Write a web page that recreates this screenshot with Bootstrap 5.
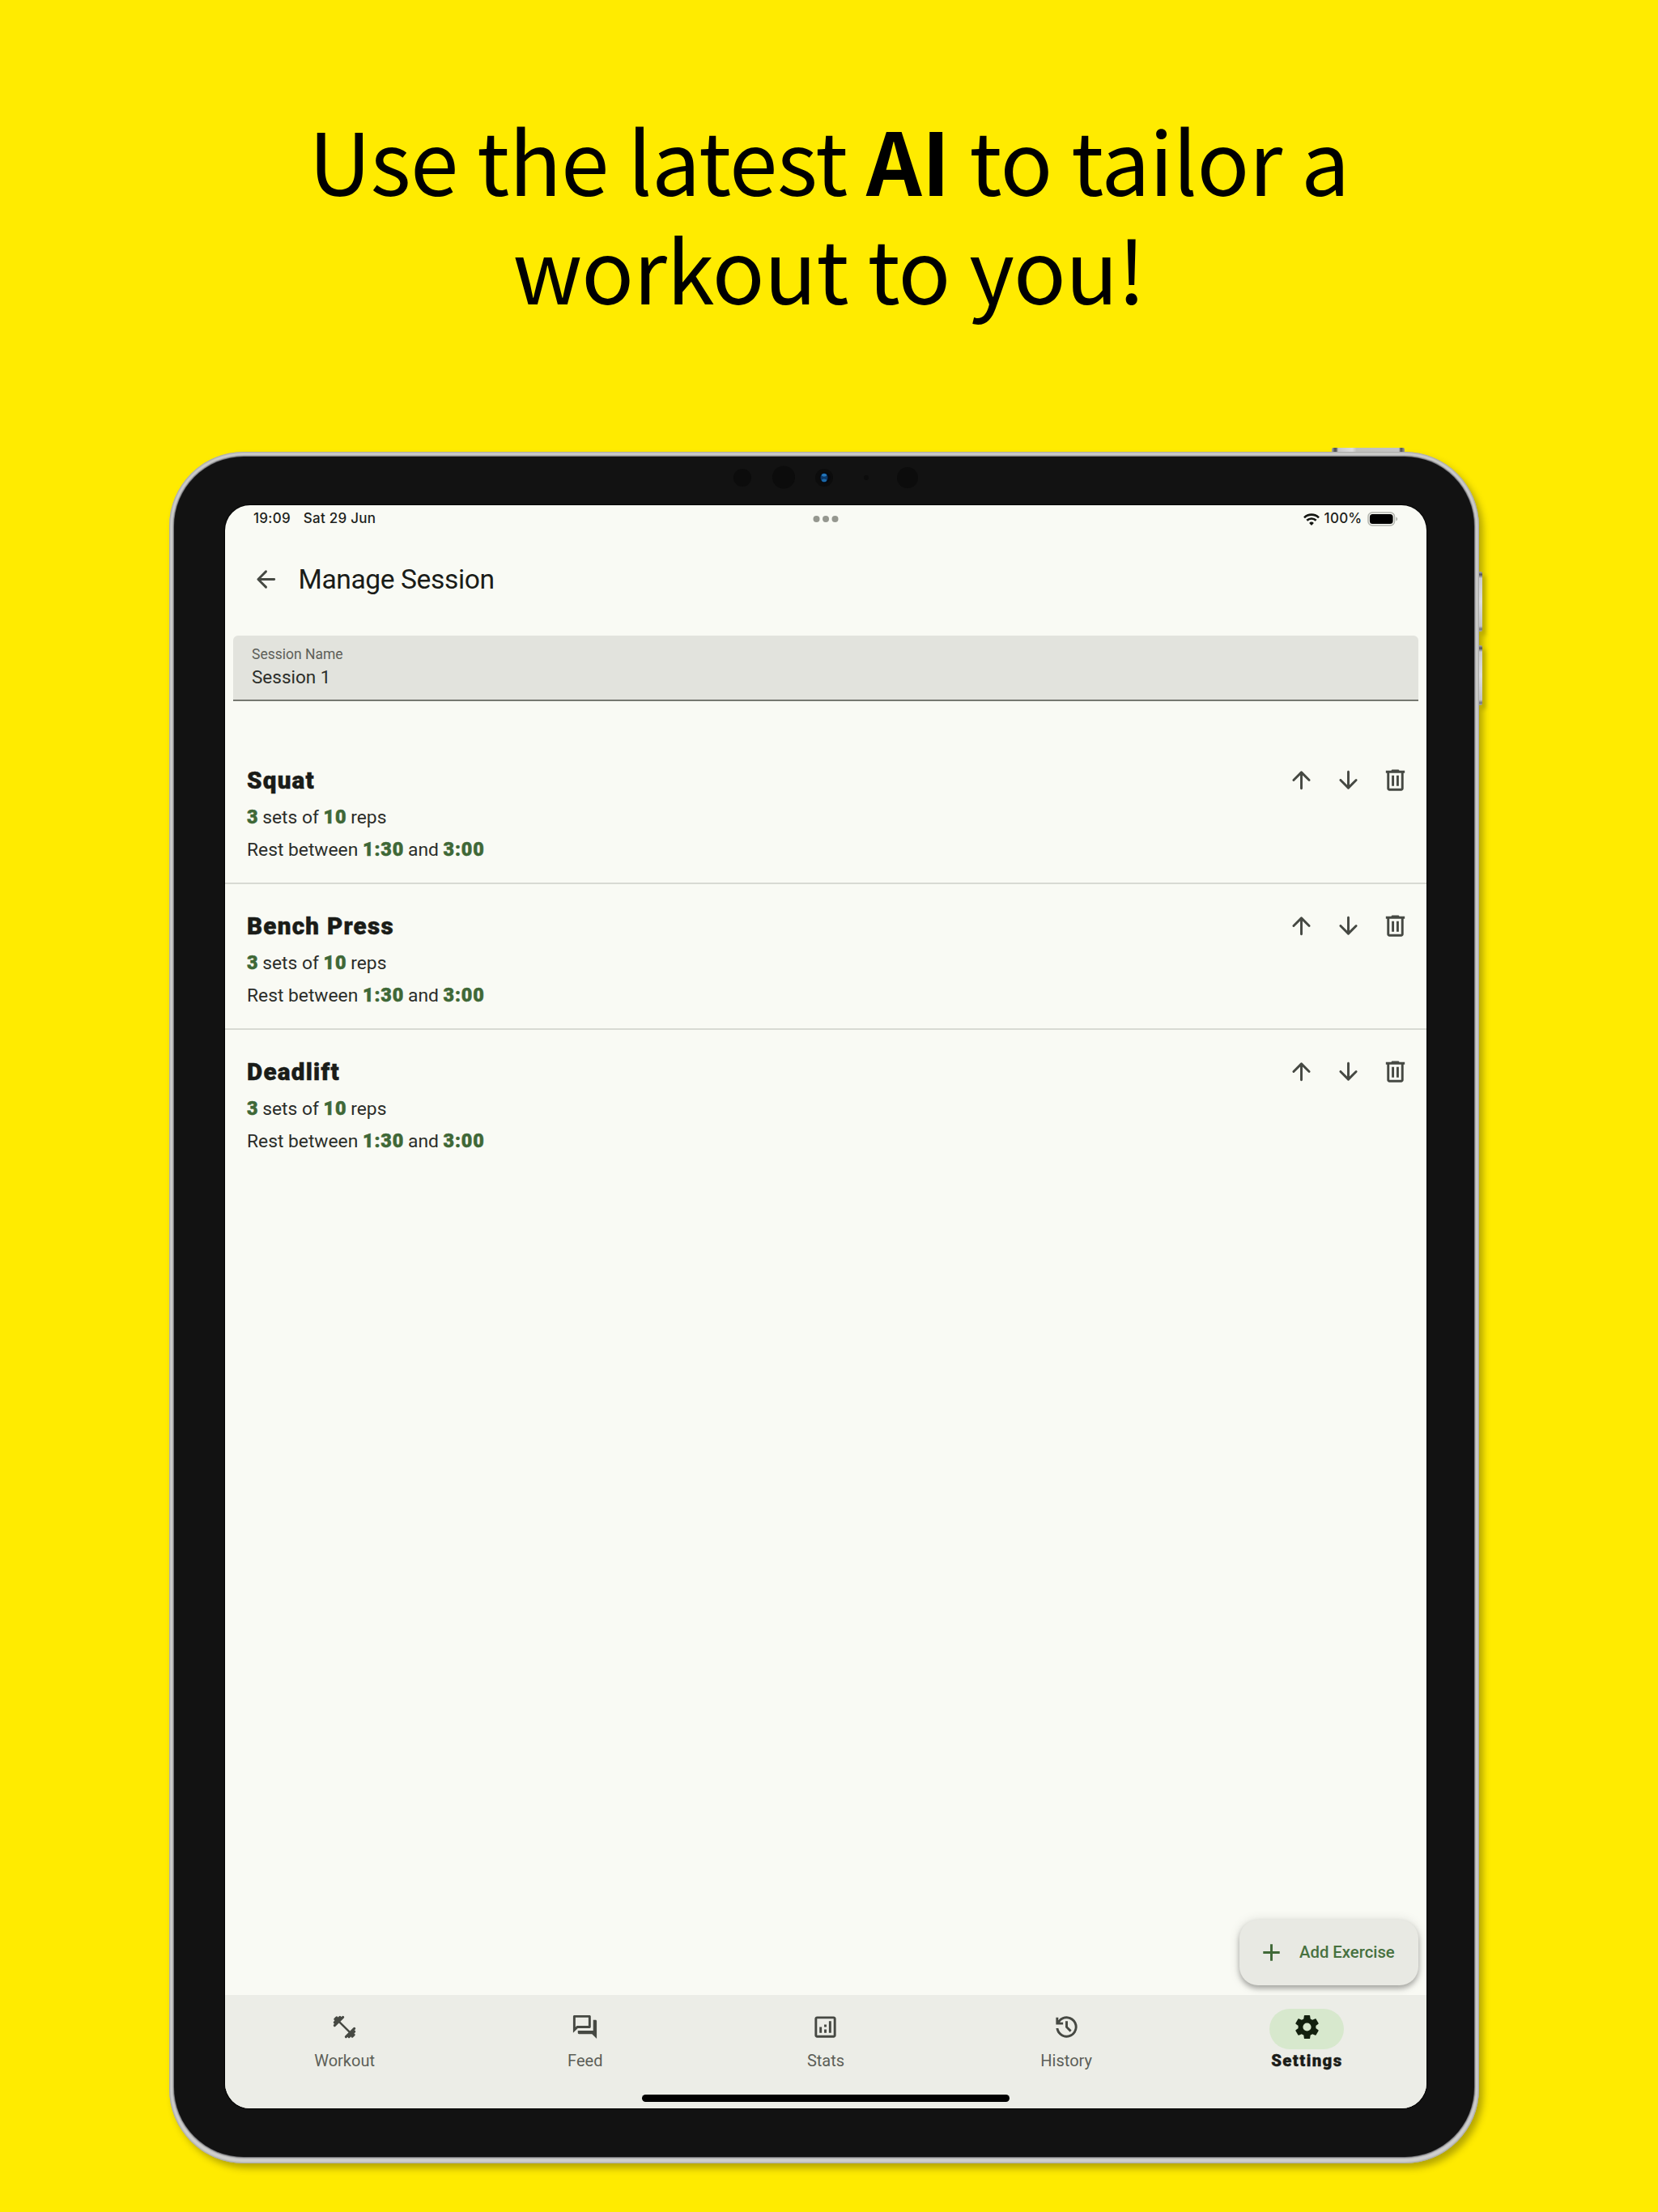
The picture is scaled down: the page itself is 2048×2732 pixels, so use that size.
<!DOCTYPE html>
<html lang="en">
<head>
<meta charset="utf-8">
<meta name="viewport" content="width=device-width, initial-scale=1">
<title>Manage Session</title>
<link rel="stylesheet" href="https://cdn.jsdelivr.net/npm/bootstrap@5.3.0/dist/css/bootstrap.min.css">
<style>
  body { background: #ffeb00; width: 2048px; height: 2732px; overflow: hidden; font-family: Roboto, "Liberation Sans", sans-serif; color: #1a1c18; }
  .headline { height: 558px; padding-top: 129px; font-family: "Noto Sans CJK SC", "Noto Sans", sans-serif; font-size: 107px; letter-spacing: -.6px; line-height: 134px; color: #000; font-weight: 400; }
  .headline strong { font-weight: 700; letter-spacing: 0; }
  .tablet { width: 1618px; height: 2114px; margin-left: 209px; padding: 6px 6px 8px; border-radius: 92px; background: #cfcfcd; box-shadow: inset 0 0 2px 1px #a3a3a0, 5px 6px 8px rgba(60,55,0,.38); }
  .bezel { background: #121212; border-radius: 86px; padding: 60px 59px 60px 63px; box-shadow: 0 0 2px 1px #55555a; }
  .screen { background: #f9faf4; border-radius: 31px; height: 1980px; width: 1484px; overflow: hidden; box-shadow: 0 0 1px 1px #050505; }
  .hw { position: absolute; }
  .hw-power { left: 1436px; top: -5px; width: 90px; height: 5px; border-radius: 2px 2px 0 0; background: linear-gradient(90deg, #aaa 0, #555 4%, #555 6%, #c8c8c8 9%, #ddd 28%, #c0c0bc 34%, #c4c4c4 92%, #555 95%, #999 100%); }
  .hw-vol { left: 1618px; width: 4px; height: 74px; border-radius: 0 2px 2px 0; background: linear-gradient(#aaa 0, #555 5%, #ccc 11%, #ddd 50%, #c4c4c4 91%, #777 96%, #aaa 100%); box-shadow: 4px 5px 5px rgba(60,55,0,.3); }
  .vol-up { top: 148px; } .vol-down { top: 239px; }
  .cams { left: 690px; top: 10px; }
  .status { height: 34px; padding: 0 35px 0 35px; font-family: Inter, sans-serif; font-size: 17px; font-weight: 500; letter-spacing: .25px; color: #1d1f1b; }
  .status .multi { left: 725px; top: 12px; }
  .status .charge { margin: 0 6.5px 0 6px; }
  .appbar { height: 127px; padding: 21.5px 0 0 33px; }
  .appbar h1 { font-size: 33.6px; font-weight: 400; letter-spacing: -.4px; line-height: 40px; margin: 0 0 0 22.5px; }
  .ic { width: 35px; height: 35px; fill: #464943; display: block; flex: none; }
  .flip { transform: rotate(180deg); }
  .field { margin: 0 10px; height: 81px; background: #e2e3dd; border-radius: 6px 6px 0 0; border-bottom: 2px solid #757870; padding: 12.5px 23px 0; }
  .field label { display: block; font-size: 17.5px; line-height: 20px; color: #5d6059; }
  .field .val { font-size: 22.500px; line-height: 26px; margin-top: 5px; color: #2c2e2a; }
  .exs { margin-top: 46px; }
  .ex { height: 180.2px; padding: 34px 10px 0 27px; border-bottom: 2px solid #d8dad3; }
  .ex:last-child { border-bottom: 0; }
  .ex h2 { font-size: 29.6px; font-weight: 900; line-height: 36px; letter-spacing: 1.25px; margin: 0; -webkit-text-stroke: .5px #1a1c18; }
  .ex p { font-size: 22.8px; line-height: 40.3px; margin: 0; color: #2b2d29; }
  .ex h2 + p { margin-top: 7.500px; }
  .ex p b { font-weight: 900; color: #3f6837; font-size: 23.4px; line-height: 1; letter-spacing: .9px; margin-right: -.9px; -webkit-text-stroke: .5px #3f6837; }
  .act { width: 57.7px; height: 36px; }
  .fab { margin: 0 10px 12px 0; width: 221px; height: 81px; border-radius: 23px; background: #e8e9e3; color: #47713f; border: 0; font-size: 20.3px; font-weight: 500; padding: 0 0 0 22px; box-shadow: 0 4px 6px rgba(0,0,0,.28), 0 1px 14px rgba(0,0,0,.13); }
  .fab .ic { fill: #3f6837; margin-right: 17px; }
  .tabs { height: 140px; background: #ecede7; margin: 0 -1px; }
  .tab { width: 20%; padding-top: 17px; color: #5c5f58; font-size: 20px; line-height: 24px; }
  .tab .pill { width: 92px; height: 50px; border-radius: 25px; margin-bottom: 1.5px; padding-bottom: 5px; }
  .tab.on { color: #1a1c18; font-weight: 900; font-size: 20.4px; letter-spacing: 1.4px; -webkit-text-stroke: .4px #1a1c18; }
  .tab.on .pill { background: #d7e8cd; } .tab.on .ic { fill: #12200e; }
  .homebar { left: 515px; bottom: 8px; width: 454px; height: 9px; border-radius: 5px; background: #000; }
</style>
</head>
<body>
<svg width="0" height="0" class="d-none">
  <symbol id="up" viewBox="0 0 24 24"><path d="M13 19V7.83l4.88 4.88c.39.39 1.03.39 1.42 0s.39-1.02 0-1.41l-6.59-6.59a.996.996 0 0 0-1.41 0l-6.6 6.58a.996.996 0 1 0 1.41 1.41L11 7.83V19c0 .55.45 1 1 1s1-.45 1-1z"/></symbol>
  <symbol id="bin" viewBox="0 0 24 24"><path fill-rule="evenodd" d="M15.500 4l-.7-1H9.200l-.7 1H4v2h1v13c0 1.100.9 2 2 2h10c1.100 0 2-.9 2-2V6h1V4zM7 6h10v13H7zM9 8h2v9H9zM13 8h2v9h-2z"/></symbol>
</svg>

<h1 class="headline text-center m-0">Use the latest <strong>AI</strong> to tailor a<br>workout to you!</h1>

<div class="tablet position-relative">
  <span class="hw hw-power"></span><span class="hw hw-vol vol-up"></span><span class="hw hw-vol vol-down"></span>
  <svg class="cams position-absolute" width="240" height="44" viewBox="0 0 240 44">
    <g fill="#0c0c0c"><circle cx="18" cy="22" r="11"/><circle cx="69" cy="21.500" r="14"/><circle cx="119" cy="22" r="11"/><circle cx="171" cy="22" r="3"/><circle cx="222" cy="22" r="13"/></g>
    <circle cx="120" cy="22" r="6.500" fill="#05080f"/><ellipse cx="119" cy="22" rx="4.500" ry="5.500" fill="#0b3768"/><ellipse cx="119" cy="18.800" rx="3" ry="1.800" fill="#2277bd"/><ellipse cx="119" cy="25.200" rx="3" ry="1.800" fill="#1c69a8"/>
  </svg>
  <div class="bezel">
    <main class="screen d-flex flex-column position-relative">
      <div class="status d-flex align-items-center position-relative">
        <span>19:09</span><span class="ms-3">Sat 29 Jun</span>
        <svg class="multi position-absolute" width="34" height="10" fill="#95978f"><circle cx="5.500" cy="5" r="4"/><circle cx="17" cy="5" r="4"/><circle cx="28.500" cy="5" r="4"/></svg>
        <svg class="ms-auto" width="20" height="15" viewBox="0 0 20 15"><g fill="none" stroke="#141612" stroke-width="2.600"><path d="M1 5.300a12.800 12.800 0 0 1 18 0"/><path d="M4.300 8.800a8.200 8.200 0 0 1 11.400 0"/></g><path d="M10 15l-2.900-3a4.200 4.200 0 0 1 5.800 0z" fill="#141612"/></svg>
        <span class="charge">100%</span>
        <svg width="38" height="18" viewBox="0 0 38 18"><rect x="1" y="1" width="32.500" height="16" rx="5" fill="none" stroke="#b3b5ae" stroke-width="1.500"/><rect x="2.900" y="2.900" width="28.700" height="12.200" rx="3.500"/><path d="M35.300 6.500v5q2-.8 2-2.500t-2-2.500z" fill="#b3b5ae"/></svg>
      </div>

      <header class="appbar d-flex align-items-start">
        <div class="d-flex align-items-center pt-3 w-100">
          <svg class="ic" viewBox="0 0 24 24"><path d="M19 11H7.830l4.880-4.880c.39-.39.39-1.030 0-1.420a.996.996 0 0 0-1.410 0l-6.590 6.590a.996.996 0 0 0 0 1.410l6.590 6.590a.996.996 0 1 0 1.410-1.410L7.830 13H19c.55 0 1-.45 1-1s-.45-1-1-1z"/></svg>
          <h1>Manage Session</h1>
        </div>
      </header>

      <div class="field"><label>Session Name</label><div class="val">Session 1</div></div>

      <section class="exs">
        <article class="ex d-flex justify-content-between">
          <div class="text-nowrap"><h2>Squat</h2><p><b>3</b> sets of <b>10</b> reps</p><p>Rest between <b>1:30</b> and <b>3:00</b></p></div>
          <div class="d-flex"><span class="act d-flex justify-content-center"><svg class="ic"><use href="#up"/></svg></span><span class="act d-flex justify-content-center"><svg class="ic flip"><use href="#up"/></svg></span><span class="act d-flex justify-content-center"><svg class="ic"><use href="#bin"/></svg></span></div>
        </article>
        <article class="ex d-flex justify-content-between">
          <div class="text-nowrap"><h2>Bench Press</h2><p><b>3</b> sets of <b>10</b> reps</p><p>Rest between <b>1:30</b> and <b>3:00</b></p></div>
          <div class="d-flex"><span class="act d-flex justify-content-center"><svg class="ic"><use href="#up"/></svg></span><span class="act d-flex justify-content-center"><svg class="ic flip"><use href="#up"/></svg></span><span class="act d-flex justify-content-center"><svg class="ic"><use href="#bin"/></svg></span></div>
        </article>
        <article class="ex d-flex justify-content-between">
          <div class="text-nowrap"><h2>Deadlift</h2><p><b>3</b> sets of <b>10</b> reps</p><p>Rest between <b>1:30</b> and <b>3:00</b></p></div>
          <div class="d-flex"><span class="act d-flex justify-content-center"><svg class="ic"><use href="#up"/></svg></span><span class="act d-flex justify-content-center"><svg class="ic flip"><use href="#up"/></svg></span><span class="act d-flex justify-content-center"><svg class="ic"><use href="#bin"/></svg></span></div>
        </article>
      </section>

      <button class="fab btn d-flex align-items-center mt-auto ms-auto position-relative z-1"><svg class="ic" viewBox="0 0 24 24"><path d="M19 13h-6v6h-2v-6H5v-2h6V5h2v6h6z"/></svg>Add Exercise</button>

      <nav class="tabs d-flex">
        <div class="tab d-flex flex-column align-items-center"><span class="pill d-flex align-items-center justify-content-center"><svg class="ic" viewBox="0 0 24 24"><g transform="rotate(45 12 12)" fill="none" stroke="#464943" stroke-linecap="round"><path stroke-width="1.700" d="M5 12h14"/><path stroke-width="2.100" d="M1.700 11v2M3.400 8.800v6.400M5.200 7v10M18.800 7v10M20.600 8.800v6.400M22.300 11v2"/></g></svg></span>Workout</div>
        <div class="tab d-flex flex-column align-items-center"><span class="pill d-flex align-items-center justify-content-center"><svg class="ic" viewBox="0 0 24 24"><path d="M15 4v7H5.170L4 12.170V4h11m1-2H3c-.55 0-1 .45-1 1v14l4-4h10c.55 0 1-.45 1-1V3c0-.55-.45-1-1-1zm5 4h-2v9H6v2c0 .55.45 1 1 1h11l4 4V7c0-.55-.45-1-1-1z"/></svg></span>Feed</div>
        <div class="tab d-flex flex-column align-items-center"><span class="pill d-flex align-items-center justify-content-center"><svg class="ic" viewBox="0 0 24 24"><path d="M19 3H5c-1.100 0-2 .9-2 2v14c0 1.100.9 2 2 2h14c1.100 0 2-.9 2-2V5c0-1.100-.9-2-2-2zm0 16H5V5h14v14zM7 12h2v5H7zm8-5h2v10h-2zm-4 7h2v3h-2zm0-4h2v2h-2z"/></svg></span>Stats</div>
        <div class="tab d-flex flex-column align-items-center"><span class="pill d-flex align-items-center justify-content-center"><svg class="ic" viewBox="0 0 24 24"><path d="M12 21a9 9 0 0 1-8.950-8H5.070A7 7 0 1 0 6.250 8H9v2H3V4h2v2.350A9 9 0 1 1 12 21zm2.800-4.800L11 12.400V7h2v4.600l3.200 3.200z"/></svg></span>History</div>
        <div class="tab on d-flex flex-column align-items-center"><span class="pill d-flex align-items-center justify-content-center"><svg class="ic" viewBox="0 0 24 24"><path d="M19.430 12.980c.04-.32.07-.64.07-.98s-.03-.66-.07-.98l2.110-1.650c.19-.15.24-.42.12-.64l-2-3.460c-.12-.22-.39-.3-.61-.22l-2.490 1c-.52-.4-1.080-.73-1.690-.98l-.38-2.650A.488.488 0 0 0 14 2h-4c-.25 0-.46.18-.49.42l-.38 2.650c-.61.25-1.170.59-1.690.98l-2.490-1c-.23-.09-.49 0-.61.22l-2 3.460c-.13.22-.07.49.12.64l2.110 1.650c-.04.32-.07.65-.07.98s.03.66.07.98l-2.110 1.650c-.19.15-.24.42-.12.64l2 3.460c.12.22.39.3.61.22l2.490-1c.52.4 1.080.73 1.690.98l.38 2.650c.03.24.24.42.49.42h4c.25 0 .46-.18.49-.42l.38-2.650c.61-.25 1.170-.59 1.690-.98l2.490 1c.23.09.49 0 .61-.22l2-3.460c.12-.22.07-.49-.12-.64l-2.110-1.650zM12 15.500a3.500 3.500 0 1 1 0-7 3.500 3.500 0 0 1 0 7z"/></svg></span>Settings</div>
      </nav>
      <div class="homebar position-absolute"></div>
    </main>
  </div>
</div>
<script src="https://cdn.jsdelivr.net/npm/bootstrap@5.3.0/dist/js/bootstrap.bundle.min.js"></script>
</body>
</html>
